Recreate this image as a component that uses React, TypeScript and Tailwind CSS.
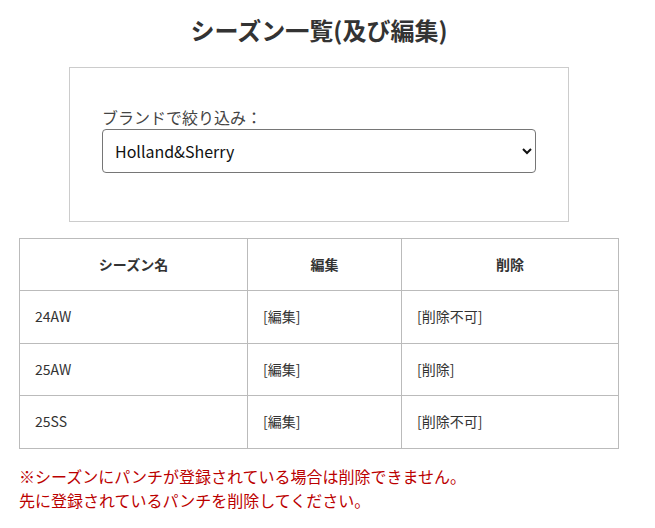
import React, { useState } from 'react'

interface Season {
  name: string
  deletable: boolean
}

const seasons: Season[] = [
  { name: '24AW', deletable: false },
  { name: '25AW', deletable: true },
  { name: '25SS', deletable: false },
]

const App: React.FC = () => {
  const [brand, setBrand] = useState('Holland&Sherry')

  return (
    <div
      className="min-h-screen bg-white text-[#333]"
      style={{ fontFamily: '"Noto Sans CJK JP", "Noto Sans", sans-serif' }}
    >
      <div className="ml-[19px] w-[600px] pt-[12px]">
        {/* Title */}
        <h2 className="text-center text-[24px] font-bold leading-[36px] mb-[19px]">
          シーズン一覧(及び編集)
        </h2>

        {/* Brand filter */}
        <div className="mx-auto w-[500px] border border-[#ccc] px-8 pt-[37px] pb-[48px]">
          <label className="block text-[16px] leading-6 text-[#444]">ブランドで絞り込み：</label>
          <select
            value={brand}
            onChange={(e) => setBrand(e.target.value)}
            className="block w-full h-[44px] border border-[#767676] rounded-[4px] pl-[8px] pr-2 text-[16px] text-[#111] bg-white"
          >
            <option>Holland&Sherry</option>
            <option>Dormeuil</option>
            <option>Loro Piana</option>
          </select>
        </div>

        {/* Season table */}
        <table className="mt-[16px] w-full border-collapse text-[14px] leading-[21px]">
          <thead>
            <tr>
              <th className="w-[228px] h-[52px] border border-[#bbb] font-bold text-center">シーズン名</th>
              <th className="w-[154px] h-[52px] border border-[#bbb] font-bold text-center">編集</th>
              <th className="h-[52px] border border-[#bbb] font-bold text-center">削除</th>
            </tr>
          </thead>
          <tbody>
            {seasons.map((s) => (
              <tr key={s.name}>
                <td className="h-[52.6px] border border-[#bbb] px-[15px]">{s.name}</td>
                <td className="h-[52.6px] border border-[#bbb] px-[15px]">
                  <a href="#" className="text-[#333]">[編集]</a>
                </td>
                <td className="h-[52.6px] border border-[#bbb] px-[15px]">
                  {s.deletable ? (
                    <a href="#" className="text-[#333]">[削除]</a>
                  ) : (
                    <span>[削除不可]</span>
                  )}
                </td>
              </tr>
            ))}
          </tbody>
        </table>

        {/* Note */}
        <p className="mt-[15px] text-[16px] leading-6 text-[#b00]">
          ※シーズンにパンチが登録されている場合は削除できません。
          <br />
          先に登録されているパンチを削除してください。
        </p>
      </div>
    </div>
  )
}

export default App
